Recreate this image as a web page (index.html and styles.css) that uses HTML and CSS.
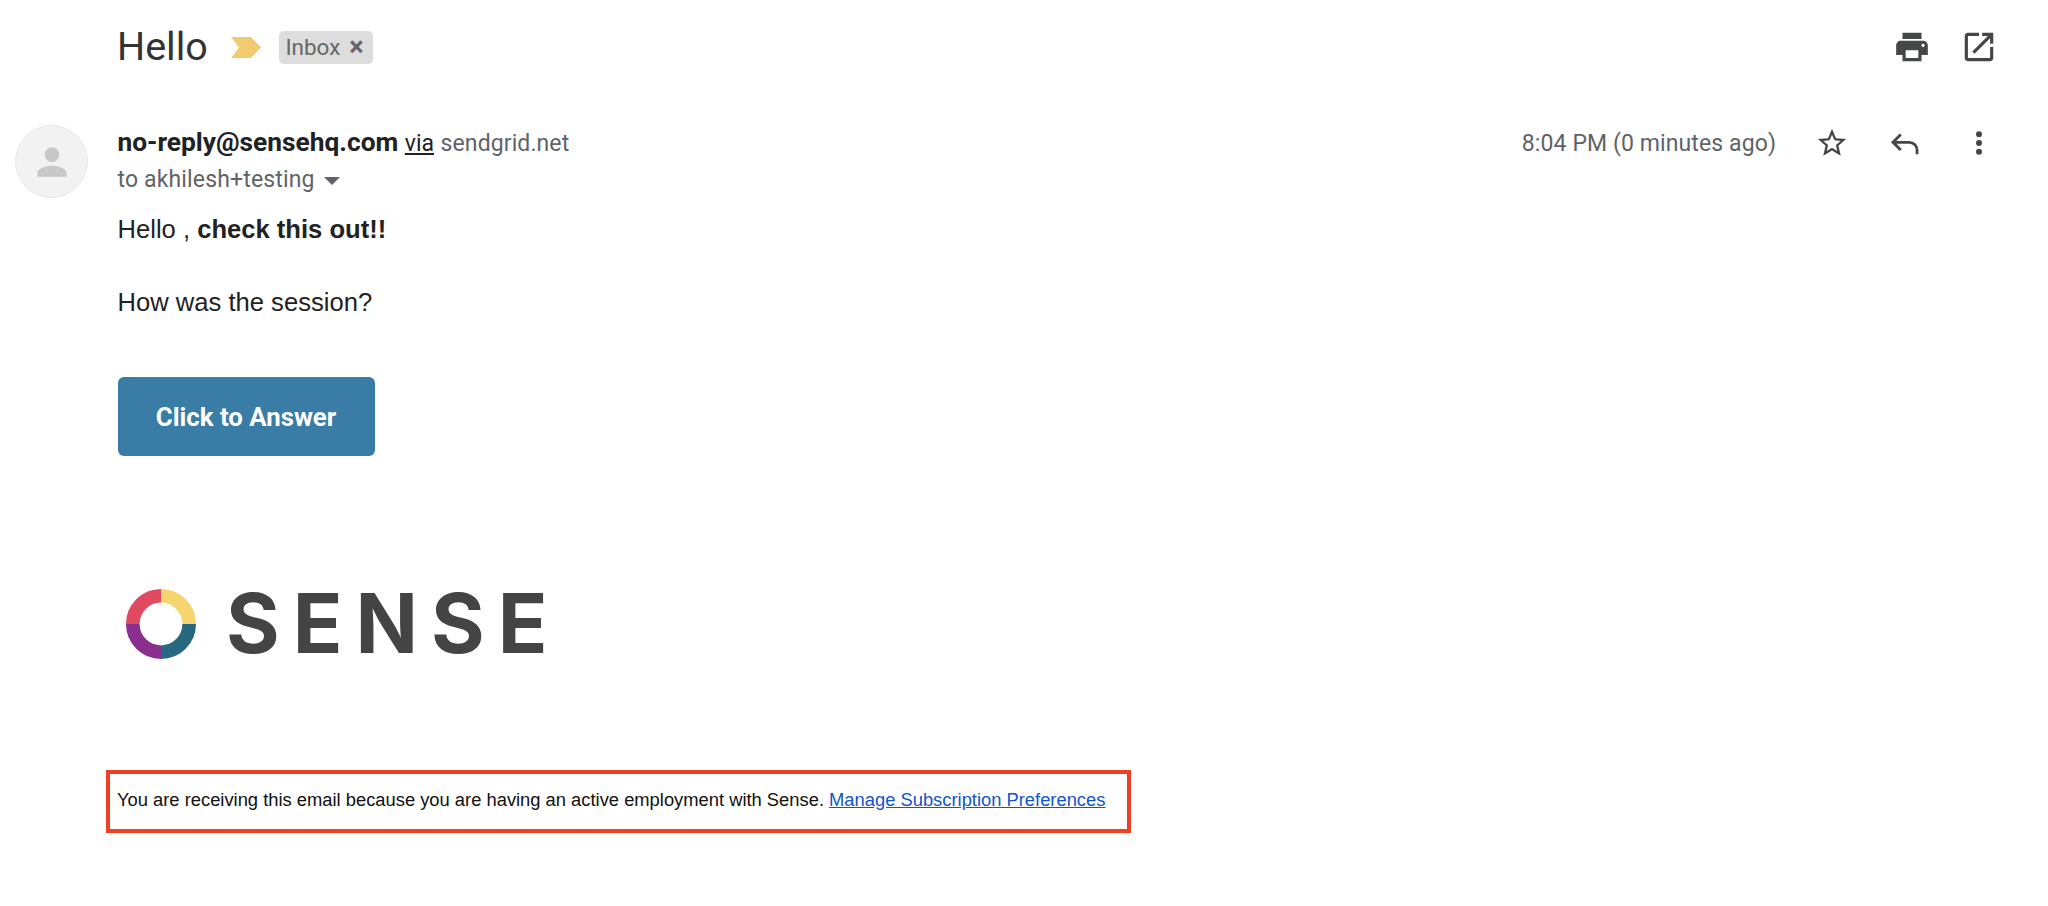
FILE: index.html
```html
<!DOCTYPE html>
<html lang="en">
<head>
<meta charset="utf-8">
<title>Hello</title>
<link rel="stylesheet" href="styles.css">
</head>
<body>
<main class="mail">
  <header class="subject-row">
    <h1 class="subject">Hello</h1>
    <svg class="importance" viewBox="0 0 30 21"><path d="M0 0H20L30 10.5 20 21H0L8 10.5Z"/></svg>
    <span class="chip">Inbox <span class="chip-x">×</span></span>
    <div class="top-actions">
      <svg class="icon" viewBox="0 0 24 24"><path d="M19 8H5c-1.66 0-3 1.34-3 3v6h4v4h12v-4h4v-6c0-1.66-1.34-3-3-3zm-3 11H8v-5h8v5zm3-7c-.55 0-1-.45-1-1s.45-1 1-1 1 .45 1 1-.45 1-1 1zm-1-9H6v4h12V3z"/></svg>
      <svg class="icon" viewBox="0 0 24 24"><path d="M19 19H5V5h7V3H5c-1.11 0-2 .9-2 2v14c0 1.1.89 2 2 2h14c1.1 0 2-.9 2-2v-7h-2v7zM14 3v2h3.59l-9.83 9.83 1.41 1.41L19 6.41V10h2V3h-7z"/></svg>
    </div>
  </header>

  <section class="message">
    <div class="avatar">
      <svg viewBox="0 0 24 24"><path d="M12 12c2.21 0 4-1.79 4-4s-1.79-4-4-4-4 1.79-4 4 1.79 4 4 4zm0 2c-2.67 0-8 1.34-8 4v2h16v-2c0-2.66-5.33-4-8-4z"/></svg>
    </div>
    <div class="content">
      <div class="meta">
        <div class="sender-block">
          <div class="sender"><strong>no-reply@sensehq.com</strong> <u class="via">via</u> <span class="domain">sendgrid.net</span></div>
          <div class="recipient">to akhilesh+testing <span class="caret"></span></div>
        </div>
        <div class="meta-right">
          <span class="time">8:04 PM (0 minutes ago)</span>
          <svg class="icon star" viewBox="0 0 24 24"><path d="M22 9.24l-7.19-.62L12 2 9.19 8.63 2 9.24l5.46 4.73L5.82 21 12 17.27 18.18 21l-1.63-7.03L22 9.24zM12 15.4l-3.76 2.27 1-4.28-3.32-2.88 4.38-.38L12 6.1l1.71 4.04 4.38.38-3.32 2.88 1 4.28L12 15.4z"/></svg>
          <svg class="icon reply" viewBox="0 0 24 24"><path d="M9 6 3.500 11.500 9 17M4 11.500H15a5.500 5.500 0 0 1 5.500 5.500V20"/></svg>
          <svg class="icon more" viewBox="0 0 24 24"><circle cx="12" cy="5" r="2.400"/><circle cx="12" cy="12" r="2.400"/><circle cx="12" cy="19" r="2.400"/></svg>
        </div>
      </div>
      <p class="greeting">Hello , <strong>check this out!!</strong></p>
      <p class="question">How was the session?</p>
      <a class="cta" href="#">Click to Answer</a>
      <div class="logo">
        <svg class="ring" viewBox="0 0 72 72">
          <g fill="none" stroke-width="14">
            <path stroke="#f6d56f" d="M36 7A29 29 0 0 1 65 36"/>
            <path stroke="#27677f" d="M65 36A29 29 0 0 1 36 65"/>
            <path stroke="#8a2f8e" d="M36 65A29 29 0 0 1 7 36"/>
            <path stroke="#df4a60" d="M7 36A29 29 0 0 1 36 7"/>
          </g>
        </svg>
        <span class="wordmark">SENSE</span>
      </div>
    </div>
  </section>

  <div class="notice">You are receiving this email because you are having an active employment with Sense. <a href="#">Manage Subscription Preferences</a></div>
</main>
</body>
</html>
```
FILE: styles.css
```css
* { box-sizing: border-box; }
html, body { margin: 0; height: 100%; background: #fff; overflow: hidden; }
body { font-family: Roboto, "Liberation Sans", sans-serif; color: #202124; }
.mail { width: 2048px; height: 906px; padding: 0 0 0 15px; }

.subject-row { display: flex; align-items: center; height: 64px; margin-top: 15px; padding-left: 102px; padding-right: 50px; }
.subject { margin: 0; font-size: 39.500px; font-weight: 400; line-height: 64px; color: #333; }
.importance { width: 30px; height: 21px; margin-left: 23px; fill: #f2cb6e; }
.chip { display: flex; align-items: center; gap: 9px; height: 33px; margin-left: 18px; padding: 0 9px 0 6.500px; background: #ddd; border-radius: 5px; font-size: 22.500px; color: #666; }
.chip-x { font-size: 27px; font-weight: 700; line-height: 1; }
.top-actions { display: flex; gap: 29px; margin-left: auto; }
.icon { width: 38px; height: 38px; fill: #444746; display: block; }

.message { display: flex; margin-top: 45px; }
.avatar { flex: none; width: 73px; height: 73px; margin-top: 1px; border-radius: 50%; background: #f2f2f2; border: 1px solid #e8e8e8; display: flex; align-items: center; justify-content: center; }
.avatar svg { width: 44px; height: 44px; fill: #c8c8c8; }
.content { flex: 1; margin-left: 29.500px; margin-right: 54px; }

.meta { display: flex; justify-content: space-between; }
.sender { font-size: 26.300px; line-height: 36px; color: #5f6368; }
.sender strong { color: #202124; font-weight: 700; }
.via { font-size: 23px; color: #202124; }
.domain { font-size: 23px; letter-spacing: .1px; }
.recipient { font-size: 23px; letter-spacing: .15px; line-height: 36px; color: #5f6368; display: flex; align-items: center; gap: 9px; }
.caret { width: 0; height: 0; border: 8px solid transparent; border-top-color: #5f6368; border-bottom-width: 0; margin-top: 2px; }

.meta-right { display: flex; align-items: center; height: 36px; margin-top: 1px; }
.time { font-size: 23px; letter-spacing: .1px; color: #5f6368; margin-right: 39px; }
.star { width: 34px; height: 34px; }
.reply { width: 34px; height: 34px; fill: none; stroke: #444746; stroke-width: 2; margin-left: 39px; }
.more { width: 30px; height: 30px; margin-left: 42px; }

.greeting, .question { margin: 0; font-family: "Liberation Sans", Arial, sans-serif; font-size: 25.600px; line-height: 36px; color: #222; }
.greeting { margin-top: 13px; }
.question { margin-top: 37px; }
.cta { display: flex; align-items: center; justify-content: center; width: 257px; height: 79px; margin-top: 57px; background: #397ca6; border-radius: 6px; color: #fff; font-size: 25.800px; font-weight: 700; text-decoration: none; }

.logo { display: flex; align-items: center; height: 72px; margin-top: 132px; margin-left: 8.500px; }
.ring { width: 70px; height: 70px; flex: none; }
.wordmark { margin-left: 30px; font-family: Inter, sans-serif; font-weight: 700; font-size: 82px; line-height: 72px; letter-spacing: 13px; color: #444; }

.notice { width: 1025px; height: 63px; margin-top: 110px; margin-left: 91px; padding: 0 0 3px 7px; border: 4px solid #ee4023; display: flex; align-items: center; font-family: "Liberation Sans", Arial, sans-serif; font-size: 18.350px; color: #111; white-space: pre; }
.notice a { color: #1155cc; }
```
